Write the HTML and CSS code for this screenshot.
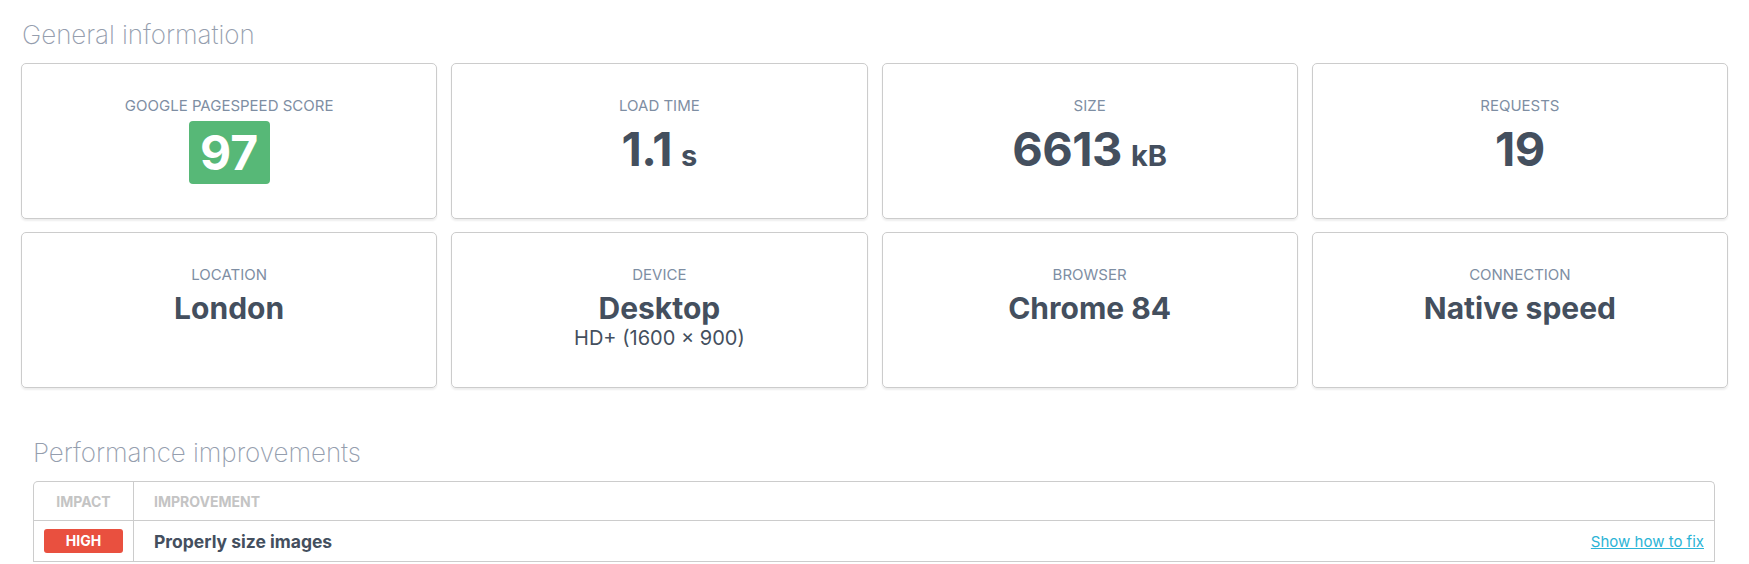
FILE: index.html
```html
<!DOCTYPE html>
<html lang="en">
<head>
<meta charset="utf-8">
<title>Report</title>
<link rel="stylesheet" href="styles.css">
</head>
<body>
<div class="page">
  <section class="general">
    <h2 class="section-title">General information</h2>
    <div class="cards">
      <div class="card">
        <div class="label">Google PageSpeed score</div>
        <div class="score">97</div>
      </div>
      <div class="card">
        <div class="label">Load time</div>
        <div class="metric">1.1<span class="unit">s</span></div>
      </div>
      <div class="card">
        <div class="label">Size</div>
        <div class="metric">6613<span class="unit">kB</span></div>
      </div>
      <div class="card">
        <div class="label">Requests</div>
        <div class="metric">19</div>
      </div>
      <div class="card">
        <div class="label">Location</div>
        <div class="info">London</div>
      </div>
      <div class="card">
        <div class="label">Device</div>
        <div class="info">Desktop</div>
        <div class="sub">HD+ (1600 × 900)</div>
      </div>
      <div class="card">
        <div class="label">Browser</div>
        <div class="info">Chrome 84</div>
      </div>
      <div class="card">
        <div class="label">Connection</div>
        <div class="info">Native speed</div>
      </div>
    </div>
  </section>

  <section class="improvements">
    <h2 class="section-title">Performance improvements</h2>
    <div class="table">
      <div class="row head">
        <div class="cell impact">Impact</div>
        <div class="cell improvement">Improvement</div>
      </div>
      <div class="row">
        <div class="cell impact"><span class="badge high">High</span></div>
        <div class="cell improvement">
          <span class="name">Properly size images</span>
          <a class="fix" href="#">Show how to fix</a>
        </div>
      </div>
    </div>
  </section>
</div>
</body>
</html>
```

FILE: styles.css
```css
* { box-sizing: border-box; }

html, body {
  margin: 0;
  padding: 0;
  background: #ffffff;
}

body {
  font-family: Inter, "Noto Sans", "Liberation Sans", sans-serif;
  color: #444f5e;
  overflow: hidden;
}

.page {
  padding: 19px 21px 0 21px;
}

.section-title {
  margin: 0;
  font-size: 26px;
  line-height: 32px;
  font-weight: 200;
  color: #959eae;
  letter-spacing: -0.05px;
}

.general .section-title {
  padding-left: 1px;
  margin-bottom: 12px;
}

.cards {
  display: grid;
  grid-template-columns: repeat(4, 1fr);
  column-gap: 14px;
  row-gap: 13px;
}

.card {
  height: 156px;
  border: 1px solid #cccccc;
  border-radius: 5px;
  box-shadow: 0 2px 2px rgba(0, 0, 0, 0.07);
  padding-top: 33px;
  display: flex;
  flex-direction: column;
  align-items: center;
  text-align: center;
}

.label {
  font-size: 15px;
  line-height: 18px;
  text-transform: uppercase;
  color: #7e8ea3;
  font-weight: 400;
}

.score {
  margin-top: 6px;
  width: 81px;
  height: 63px;
  border-radius: 4px;
  background: #57b877;
  color: #ffffff;
  font-size: 48px;
  font-weight: 700;
  line-height: 63px;
  text-align: center;
}

.metric {
  margin-top: 9px;
  font-size: 47px;
  line-height: 50px;
  font-weight: 700;
  color: #444f5e;
  letter-spacing: -0.5px;
}

.unit {
  font-size: 29px;
  margin-left: 9px;
  letter-spacing: 0;
}

.info {
  margin-top: 6px;
  font-size: 30px;
  line-height: 36px;
  font-weight: 700;
  color: #444f5e;
}

.sub {
  font-size: 20px;
  line-height: 24px;
  font-weight: 400;
  color: #444f5e;
}

.improvements {
  margin-top: 49px;
  padding: 0 13px 0 12px;
}

.improvements .section-title {
  padding-left: 0;
  margin-bottom: 12px;
}

.table {
  border: 1px solid #cccccc;
  border-bottom: none;
  border-radius: 5px 5px 0 0;
}

.row {
  display: flex;
  border-bottom: 1px solid #cccccc;
  height: 41px;
}

.row.head {
  height: 39px;
}

.cell {
  display: flex;
  align-items: center;
}

.cell.impact {
  width: 100px;
  flex: none;
  justify-content: center;
  border-right: 1px solid #cccccc;
}

.cell.improvement {
  flex: 1;
  padding: 0 10px 0 20px;
  justify-content: space-between;
}

.head .cell {
  font-size: 14px;
  font-weight: 700;
  text-transform: uppercase;
  color: #c4c4c4;
}

.badge {
  display: block;
  width: 79px;
  height: 24px;
  border-radius: 3px;
  line-height: 24px;
  text-align: center;
  font-size: 14px;
  font-weight: 700;
  color: #ffffff;
  text-transform: uppercase;
}

.badge.high {
  background: #e9503f;
}

.name {
  font-size: 17.5px;
  font-weight: 700;
  color: #444f5e;
}

.fix {
  font-size: 15px;
  color: #2bb4d6;
  text-decoration: underline;
}
```
